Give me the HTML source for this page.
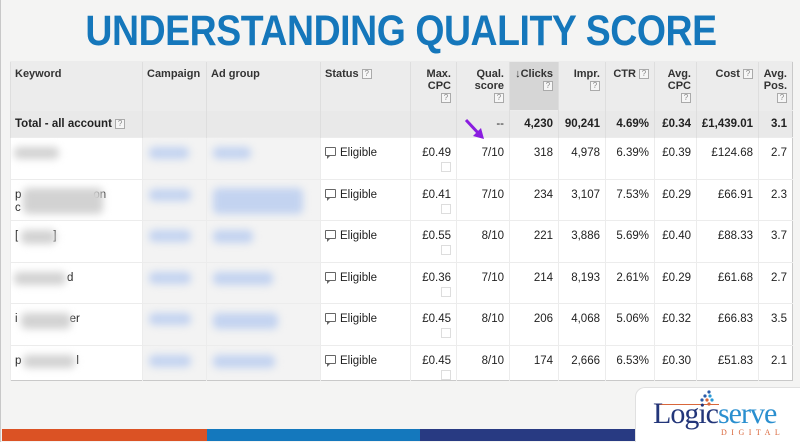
<!DOCTYPE html>
<html><head><meta charset="utf-8"><style>
*{margin:0;padding:0;box-sizing:border-box}
body{width:800px;height:442px;overflow:hidden;background:#f4f4f3;font-family:"Liberation Sans",Arial,sans-serif;position:relative;border-left:1px solid #c8c8c8}
.title{position:absolute;left:0;top:7px;width:800px;text-align:center;color:#1577bb;font-weight:bold;font-size:43px;line-height:49px;letter-spacing:-0.5px;transform:scaleX(0.87);transform-origin:400px 0;white-space:nowrap}
table{position:absolute;left:9px;top:61px;border-collapse:collapse;table-layout:fixed;width:782px;font-size:11.5px;color:#222;border:1px solid #c9c9c9;background:#fff}
td{border-left:1px solid #ececec;border-top:1px solid #ececec;vertical-align:top;padding:6px 5px 0 4px;overflow:hidden;white-space:nowrap;position:relative}
tr.h td{height:49px;background:#ececec;font-weight:bold;color:#333;border-left:1px solid #dedede;padding-top:6px;font-size:11px;line-height:12px;white-space:normal}
tr.h td.r{text-align:right}
tr.h td.s{background:#d6d6d6}
tr.t td{height:27px;background:#e9e9e9;font-weight:bold;padding-top:7px;border-left:1px solid #dedede}
tr.d td{height:41.5px;padding-top:9px}
tr.last td{height:27px}
tr.d td.g{background:#f3f3f3}
td.r{text-align:right}
.q{display:inline-block;width:10px;height:10px;border:1px solid #aaa;font-size:8px;line-height:8px;text-align:center;color:#888;font-weight:normal;vertical-align:1px;background:#f6f6f6}
.bl{position:absolute;filter:blur(4px);border-radius:5px}
.k{background:#d2d2d2}.c{background:#c3d3f0}
.ch{display:inline-block;width:11px;height:9px;border:1px solid #666;border-radius:1px;margin-right:4px;vertical-align:0;position:relative}
.ch:after{content:"";position:absolute;left:1px;bottom:-4px;width:0;height:0;border-left:3px solid #666;border-bottom:3px solid transparent}
.sp{display:block;margin-left:auto;margin-top:3px;width:10px;height:10px;border:1px solid #ddd}
.bar{position:absolute;top:429px;height:12px}
</style></head><body>
<div class="title">UNDERSTANDING QUALITY SCORE</div>
<table>
<colgroup><col style="width:132px"><col style="width:64px"><col style="width:114px"><col style="width:90px"><col style="width:46px"><col style="width:53px"><col style="width:49px"><col style="width:47px"><col style="width:49px"><col style="width:42px"><col style="width:62px"><col style="width:34px"></colgroup>
<tr class="h"><td>Keyword</td><td>Campaign</td><td>Ad group</td><td>Status <span class="q">?</span></td><td class="r">Max. CPC<br><span class="q">?</span></td><td class="r">Qual. score<br><span class="q">?</span></td><td class="r s">&#8595;Clicks<br><span class="q">?</span></td><td class="r">Impr.<br><span class="q">?</span></td><td class="r">CTR <span class="q">?</span></td><td class="r">Avg. CPC<br><span class="q">?</span></td><td class="r">Cost <span class="q">?</span></td><td class="r">Avg. Pos.<br><span class="q">?</span></td></tr>
<tr class="t"><td>Total - all account <span class="q">?</span></td><td></td><td></td><td></td><td></td><td class="r" style="font-weight:normal">--</td><td class="r">4,230</td><td class="r">90,241</td><td class="r">4.69%</td><td class="r">£0.34</td><td class="r">£1,439.01</td><td class="r">3.1</td></tr>
<tr class="d"><td><div class="bl k" style="left:3px;top:9px;width:45px;height:12px"></div></td><td class="g"><div class="bl c" style="left:6px;top:9px;width:40px;height:12px"></div></td><td class="g"><div class="bl c" style="left:6px;top:9px;width:38px;height:12px"></div></td><td><span class="ch"></span>Eligible</td><td class="r">£0.49<span class="sp"></span></td><td class="r">7/10</td><td class="r">318</td><td class="r">4,978</td><td class="r">6.39%</td><td class="r">£0.39</td><td class="r">£124.68</td><td class="r">2.7</td></tr>
<tr class="d"><td style="white-space:normal;line-height:13px">p<span style="display:inline-block;width:72px"></span>on<br>c<div class="bl k" style="left:12px;top:8px;width:80px;height:26px"></div></td><td class="g"><div class="bl c" style="left:6px;top:9px;width:42px;height:12px"></div></td><td class="g"><div class="bl c" style="left:6px;top:8px;width:90px;height:26px"></div></td><td><span class="ch"></span>Eligible</td><td class="r">£0.41<span class="sp"></span></td><td class="r">7/10</td><td class="r">234</td><td class="r">3,107</td><td class="r">7.53%</td><td class="r">£0.29</td><td class="r">£66.91</td><td class="r">2.3</td></tr>
<tr class="d"><td>[<span style="display:inline-block;width:35px"></span>]<div class="bl k" style="left:10px;top:9px;width:35px;height:14px"></div></td><td class="g"><div class="bl c" style="left:6px;top:9px;width:42px;height:12px"></div></td><td class="g"><div class="bl c" style="left:6px;top:9px;width:40px;height:13px"></div></td><td><span class="ch"></span>Eligible</td><td class="r">£0.55<span class="sp"></span></td><td class="r">8/10</td><td class="r">221</td><td class="r">3,886</td><td class="r">5.69%</td><td class="r">£0.40</td><td class="r">£88.33</td><td class="r">3.7</td></tr>
<tr class="d"><td><span style="display:inline-block;width:52px"></span>d<div class="bl k" style="left:3px;top:9px;width:52px;height:13px"></div></td><td class="g"><div class="bl c" style="left:6px;top:9px;width:42px;height:12px"></div></td><td class="g"><div class="bl c" style="left:6px;top:9px;width:60px;height:13px"></div></td><td><span class="ch"></span>Eligible</td><td class="r">£0.36<span class="sp"></span></td><td class="r">7/10</td><td class="r">214</td><td class="r">8,193</td><td class="r">2.61%</td><td class="r">£0.29</td><td class="r">£61.68</td><td class="r">2.7</td></tr>
<tr class="d"><td>i<span style="display:inline-block;width:52px"></span>er<div class="bl k" style="left:10px;top:9px;width:50px;height:16px"></div></td><td class="g"><div class="bl c" style="left:6px;top:9px;width:42px;height:12px"></div></td><td class="g"><div class="bl c" style="left:6px;top:9px;width:65px;height:16px"></div></td><td><span class="ch"></span>Eligible</td><td class="r">£0.45<span class="sp"></span></td><td class="r">8/10</td><td class="r">206</td><td class="r">4,068</td><td class="r">5.06%</td><td class="r">£0.32</td><td class="r">£66.83</td><td class="r">3.5</td></tr>
<tr class="d last"><td>p<span style="display:inline-block;width:55px"></span>l<div class="bl k" style="left:12px;top:9px;width:52px;height:13px"></div></td><td class="g"><div class="bl c" style="left:6px;top:9px;width:42px;height:12px"></div></td><td class="g"><div class="bl c" style="left:6px;top:9px;width:62px;height:13px"></div></td><td><span class="ch"></span>Eligible</td><td class="r">£0.45<span class="sp"></span></td><td class="r">8/10</td><td class="r">174</td><td class="r">2,666</td><td class="r">6.53%</td><td class="r">£0.30</td><td class="r">£51.83</td><td class="r">2.1</td></tr>
</table>
<svg style="position:absolute;left:460px;top:116px" width="30" height="28"><line x1="5" y1="4" x2="19" y2="19" stroke="#8a1de0" stroke-width="3"/><polygon points="23,23 12,20 20,12" fill="#8a1de0"/></svg>
<div class="bar" style="left:1px;width:205px;background:#db5224"></div>
<div class="bar" style="left:206px;width:213px;background:#1478bd"></div>
<div class="bar" style="left:419px;width:220px;background:#283a82"></div>
<div style="position:absolute;left:634px;top:387px;width:166px;height:55px;background:#fff;border-top-left-radius:10px;border-left:1px solid #e0e0e0;border-top:1px solid #e0e0e0"></div>
<div style="position:absolute;left:655px;top:404px;width:63px;height:1px;background:#d9663a"></div>
<svg style="position:absolute;left:698px;top:390px" width="20" height="16"><circle cx="10" cy="2" r="1.6" fill="#2a5ba8"/><circle cx="6" cy="6" r="1.6" fill="#2a5ba8"/><circle cx="11" cy="6" r="1.6" fill="#2a9ad6"/><circle cx="3" cy="10" r="1.6" fill="#2a5ba8"/><circle cx="8" cy="10" r="1.6" fill="#d9663a"/><circle cx="13" cy="10" r="1.6" fill="#2a9ad6"/><circle cx="10" cy="14" r="1.6" fill="#d9663a"/></svg>
<div style="position:absolute;left:652px;top:398px;font-family:'Liberation Serif',serif;font-size:30px;line-height:32px;letter-spacing:-1px;white-space:nowrap"><span style="color:#23367a">Logic</span><span style="color:#2a8fcf">serve</span></div>
<div style="position:absolute;left:720px;top:428px;font-family:'Liberation Serif',serif;font-size:8px;letter-spacing:4.5px;color:#d9663a">DIGITAL</div>
</body></html>
